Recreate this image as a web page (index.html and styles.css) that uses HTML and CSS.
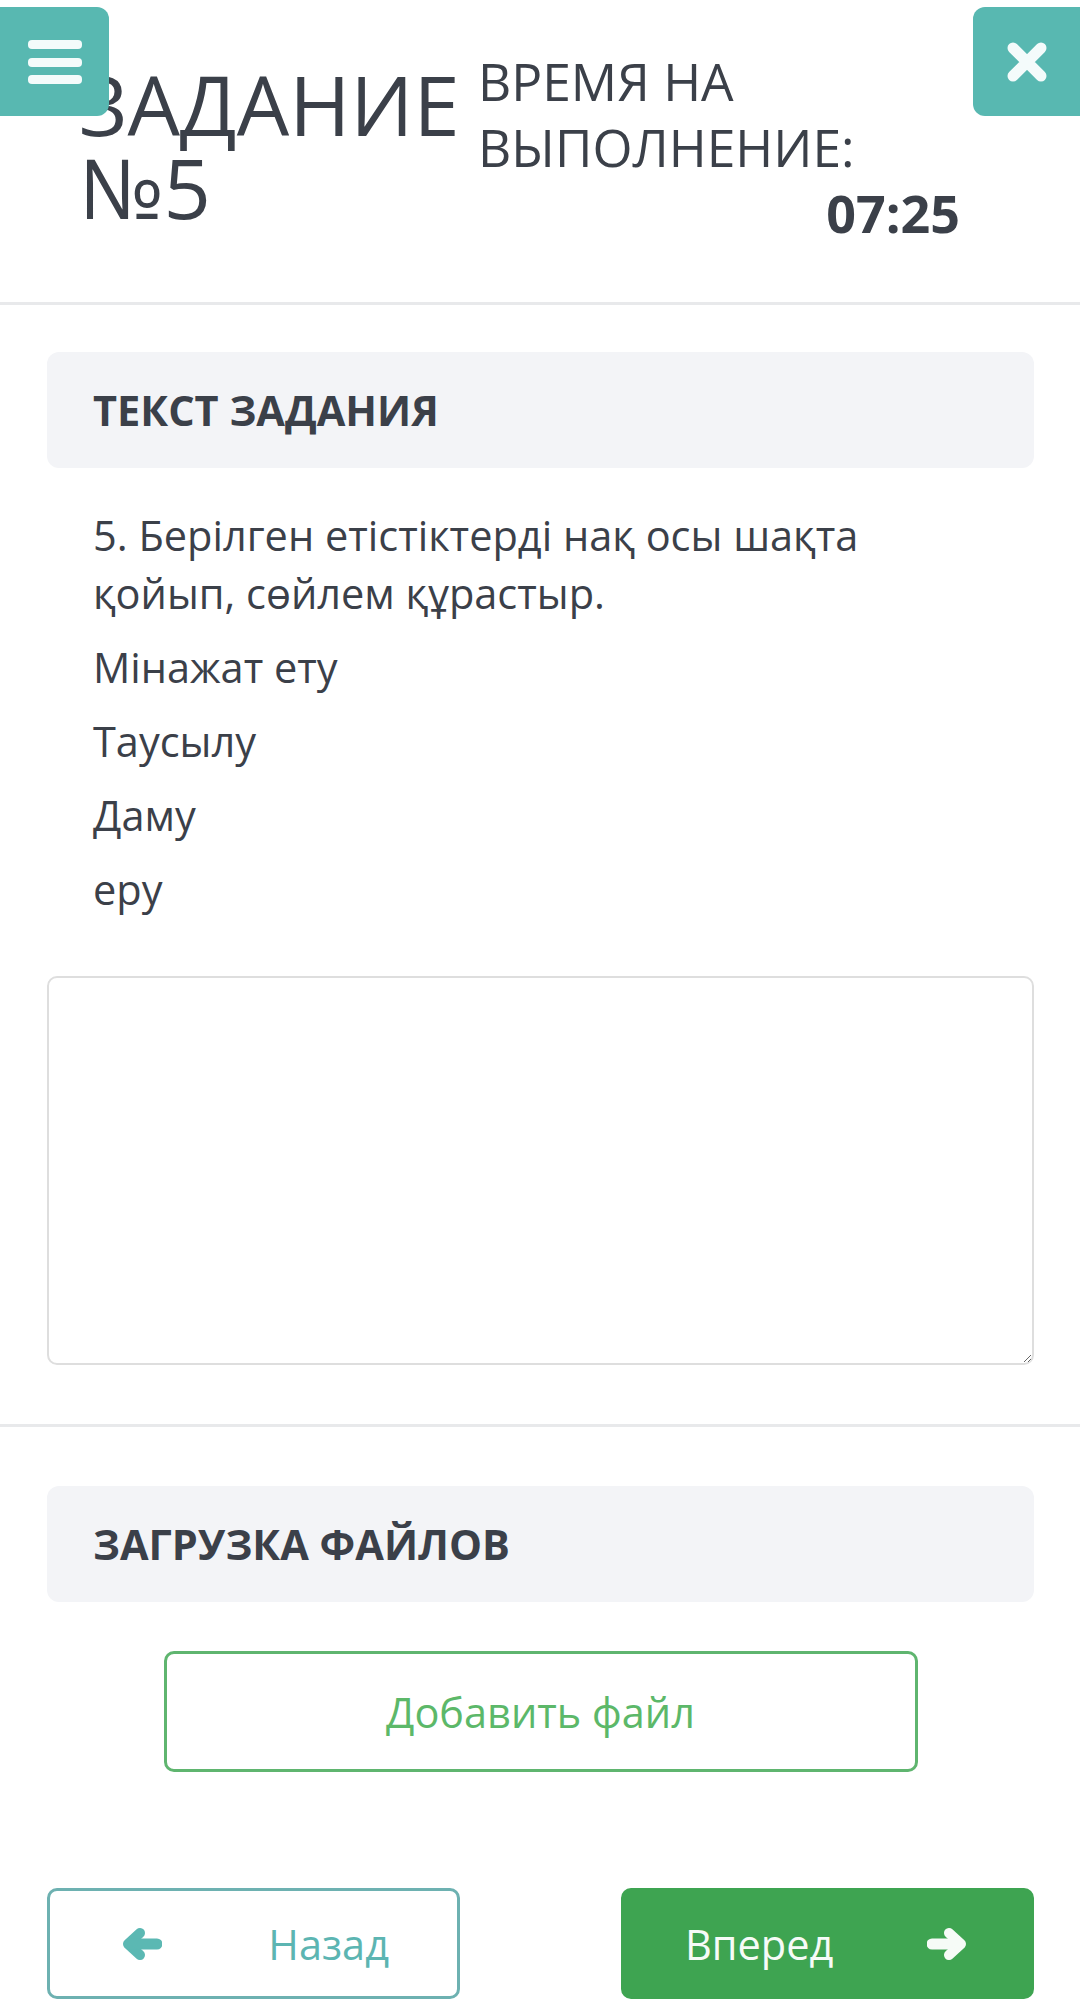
FILE: index.html
```html
<!DOCTYPE html>
<html lang="ru">
  <head>
    <meta charset="UTF-8" />
    <meta name="viewport" content="width=device-width, initial-scale=1.0" />
    <title>Задание №5</title>
    <link rel="stylesheet" href="styles.css">
  </head>
  <body>
    <!-- Top bar -->
    <header class="task-header">
      <button class="menu-btn" aria-label="Меню">
        <svg width="54" height="44" viewBox="0 0 54 44">
          <rect x="0" y="0" width="54" height="9" rx="4" fill="#f4fbfb" />
          <rect x="0" y="18" width="54" height="9" rx="4" fill="#f4fbfb" />
          <rect x="0" y="35" width="54" height="9" rx="4" fill="#f4fbfb" />
        </svg>
      </button>

      <h1 class="task-title">ЗАДАНИЕ №5</h1>

      <div class="timer">
        <div class="timer-label">ВРЕМЯ НА ВЫПОЛНЕНИЕ:</div>
        <div class="timer-value">07:25</div>
      </div>

      <button class="close-btn" aria-label="Закрыть">
        <svg width="42" height="42" viewBox="0 0 42 42">
          <path d="M7 7 L35 35 M35 7 L7 35" stroke="#f4fbfb" stroke-width="11" stroke-linecap="round" />
        </svg>
      </button>
    </header>

    <!-- Task text -->
    <section class="task">
      <div class="block-title">ТЕКСТ ЗАДАНИЯ</div>
      <div class="task-text">
        <p>5. Берілген етістіктерді нақ осы шақта қойып, сөйлем құрастыр.</p>
        <p>Мінажат ету</p>
        <p>Таусылу</p>
        <p>Даму</p>
        <p>еру</p>
      </div>
      <textarea class="answer"></textarea>
    </section>

    <!-- Files -->
    <section class="upload">
      <div class="block-title">ЗАГРУЗКА ФАЙЛОВ</div>
      <button class="add-file">Добавить файл</button>

      <div class="nav">
        <button class="nav-btn back">
          <svg width="40" height="32" viewBox="0 0 40 32">
            <path d="M18 5 L6 16 L18 27" fill="none" stroke="#5bb8b3" stroke-width="10" stroke-linecap="round" stroke-linejoin="round" />
            <path d="M8 16 L35 16" stroke="#5bb8b3" stroke-width="11" stroke-linecap="round" />
          </svg>
          <span>Назад</span>
        </button>
        <button class="nav-btn next">
          <span>Вперед</span>
          <svg width="40" height="32" viewBox="0 0 40 32">
            <path d="M22 5 L34 16 L22 27" fill="none" stroke="#f6fbf7" stroke-width="10" stroke-linecap="round" stroke-linejoin="round" />
            <path d="M5 16 L32 16" stroke="#f6fbf7" stroke-width="11" stroke-linecap="round" />
          </svg>
        </button>
      </div>
    </section>
  </body>
</html>
```

FILE: styles.css
```css
body {
  margin: 0;
  padding: 0;
  background-color: white;
  font-family: "Open Sans", "Noto Sans", sans-serif;
  color: #3b4049;
}

button {
  font-family: inherit;
  cursor: pointer;
}

/* Header */
.task-header {
  position: relative;
  display: flex;
  align-items: flex-start;
  height: 254px;
  padding: 48px 0 0 79px;
  border-bottom: 3px solid #e8e9eb;
}

.menu-btn,
.close-btn {
  position: absolute;
  top: 7px;
  width: 109px;
  height: 109px;
  border: none;
  background-color: #58b8b1;
  display: flex;
  align-items: center;
  justify-content: center;
  padding: 0;
  z-index: 2;
}

.menu-btn {
  left: 0;
  border-radius: 0 12px 12px 0;
}

.close-btn {
  right: 0;
  width: 107px;
  border-radius: 12px 0 0 12px;
}

.task-title {
  width: 380px;
  margin: 14px 19px 0 0;
  font-size: 83px;
  line-height: 83px;
  font-weight: 400;
  color: #3b4049;
}

.timer {
  width: 482px;
  font-size: 51.5px;
  line-height: 66px;
}

.timer-value {
  text-align: right;
  font-weight: 700;
  font-size: 52px;
}

/* Content blocks */
.task {
  padding: 47px 46px 59px 47px;
  border-bottom: 3px solid #e8e9eb;
}

.upload {
  padding: 59px 46px 0 47px;
}

.block-title {
  display: flex;
  align-items: center;
  height: 116px;
  padding-left: 46px;
  border-radius: 12px;
  background-color: #f3f4f7;
  font-size: 41.5px;
  font-weight: 700;
}

.task-text {
  padding: 38px 60px 0 46px;
  font-size: 41.5px;
  line-height: 58px;
}

.task-text p {
  margin: 0 0 16px 0;
}

.task-text p:last-child {
  margin-bottom: 0;
}

.answer {
  display: block;
  width: 100%;
  height: 389px;
  margin-top: 58px;
  box-sizing: border-box;
  border: 2px solid #dedede;
  border-radius: 10px;
  font-family: inherit;
  font-size: 41.5px;
}

.add-file {
  display: block;
  width: 754px;
  height: 121px;
  margin: 49px auto 0 auto;
  border: 3px solid #5fb56f;
  border-radius: 10px;
  background-color: white;
  color: #5cb869;
  font-size: 41.5px;
}

/* Bottom navigation */
.nav {
  display: flex;
  justify-content: space-between;
  margin-top: 116px;
}

.nav-btn {
  display: flex;
  align-items: center;
  justify-content: space-between;
  width: 413px;
  height: 111px;
  border-radius: 10px;
  font-size: 41.5px;
}

.nav-btn.back {
  padding: 0 68px 0 72px;
  border: 3px solid #6db1b1;
  background-color: white;
  color: #5cb5b2;
}

.nav-btn.next {
  padding: 0 64px 0 61px;
  border: 3px solid #3ea451;
  background-color: #3ea451;
  color: #f6fbf7;
}
```
